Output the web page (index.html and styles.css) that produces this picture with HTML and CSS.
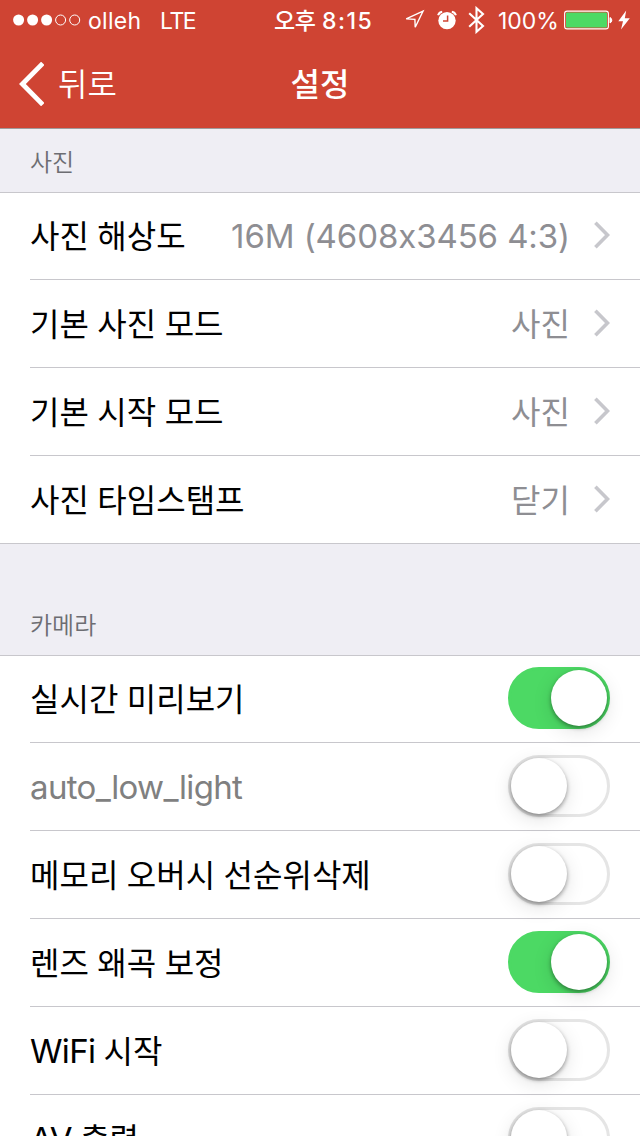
FILE: index.html
```html
<!DOCTYPE html>
<html lang="ko">
<head>
<meta charset="utf-8">
<title>설정</title>
<link rel="stylesheet" href="styles.css">
</head>
<body>
<div class="screen">
  <header class="header">
    <div class="status">
      <div class="status-left">
        <svg class="signal" width="68" height="12" viewBox="0 0 68 12"><g fill="#fff"><circle cx="5.6" cy="6" r="5.5"/><circle cx="19.6" cy="6" r="5.5"/><circle cx="33.6" cy="6" r="5.5"/></g><g fill="none" stroke="#fff"><circle cx="47.6" cy="6" r="5"/><circle cx="61.7" cy="6" r="5"/></g></svg>
        <span class="carrier">olleh</span>
        <span class="network">LTE</span>
      </div>
      <div class="status-time"><span class="ampm">오후</span><span class="clock">8:15</span></div>
      <div class="status-right">
        <svg class="icon-location" width="22" height="22" viewBox="0 0 22 22"><path d="M20 2.2L3.2 9.9L11.9 10.3L12.2 18.2Z" fill="none" stroke="#fff" stroke-width="1.4"/></svg>
        <svg class="icon-alarm" width="20" height="20" viewBox="0 0 20 20"><circle cx="10" cy="10.6" r="8.7" fill="#fff"/><path d="M1.1 5.3A5 5 0 0 1 5.2 1.7M14.8 1.7A5 5 0 0 1 18.9 5.3" fill="none" stroke="#fff" stroke-width="2"/><path d="M10.6 5.4V10.9H6" fill="none" stroke="#cf4433" stroke-width="1.5"/></svg>
        <svg class="icon-bluetooth" width="17" height="28" viewBox="0 0 17 28"><path d="M1.2 7.2L15 20L8.5 25.8V2.2L15 8L1.2 20.8" fill="none" stroke="#fff" stroke-width="2.1"/></svg>
        <span class="percent">100%</span>
        <svg class="icon-battery" width="50" height="20" viewBox="0 0 50 20"><rect x=".6" y="1.1" width="43.8" height="17.8" rx="2.5" fill="none" stroke="#fff" stroke-width="1.1"/><rect x="2" y="2.5" width="41" height="15" rx="1" fill="#4cd964"/><path d="M46 7.5A3 3 0 0 1 46 13Z" fill="#fff" stroke="#fff"/></svg>
        <svg class="icon-bolt" width="12" height="20" viewBox="0 0 12 20"><path d="M8.2 .5L.3 11.3H5L3 19.5L11.8 8.2H6.8Z" fill="#fff"/></svg>
      </div>
    </div>
    <nav class="nav">
      <div class="back">
        <svg width="26" height="44" viewBox="0 0 26 44"><path d="M24.8 1.4L4.4 22L24.8 42.6" fill="none" stroke="#fff" stroke-width="4.8"/></svg>
        <span>뒤로</span>
      </div>
      <h1 class="title">설정</h1>
      <div class="nav-end"></div>
    </nav>
  </header>
  <main>
    <h2 class="section-title first">사진</h2>
    <section class="group">
      <div class="row"><span class="label">사진 해상도</span><span class="value latin resolution">16M (4608x3456 4:3)</span><svg class="chevron" width="17" height="28" viewBox="0 0 17 28"><path d="M2.4 1.8L14.5 14L2.4 26.2" fill="none" stroke="#c7c7cc" stroke-width="3.6"/></svg></div>
      <div class="row"><span class="label">기본 사진 모드</span><span class="value">사진</span><svg class="chevron" width="17" height="28" viewBox="0 0 17 28"><path d="M2.4 1.8L14.5 14L2.4 26.2" fill="none" stroke="#c7c7cc" stroke-width="3.6"/></svg></div>
      <div class="row"><span class="label">기본 시작 모드</span><span class="value">사진</span><svg class="chevron" width="17" height="28" viewBox="0 0 17 28"><path d="M2.4 1.8L14.5 14L2.4 26.2" fill="none" stroke="#c7c7cc" stroke-width="3.6"/></svg></div>
      <div class="row last"><span class="label">사진 타임스탬프</span><span class="value">닫기</span><svg class="chevron" width="17" height="28" viewBox="0 0 17 28"><path d="M2.4 1.8L14.5 14L2.4 26.2" fill="none" stroke="#c7c7cc" stroke-width="3.6"/></svg></div>
    </section>
    <h2 class="section-title">카메라</h2>
    <section class="group">
      <div class="row"><span class="label">실시간 미리보기</span><span class="switch on"><span class="knob"></span></span></div>
      <div class="row"><span class="label latin disabled">auto_low_light</span><span class="switch"><span class="knob"></span></span></div>
      <div class="row"><span class="label">메모리 오버시 선순위삭제</span><span class="switch"><span class="knob"></span></span></div>
      <div class="row"><span class="label">렌즈 왜곡 보정</span><span class="switch on"><span class="knob"></span></span></div>
      <div class="row"><span class="label mixed"><span class="latin">WiFi</span> 시작</span><span class="switch"><span class="knob"></span></span></div>
      <div class="row"><span class="label mixed"><span class="latin">AV</span> 출력</span><span class="switch"><span class="knob"></span></span></div>
    </section>
  </main>
</div>
</body>
</html>
```
FILE: styles.css
```css
* { box-sizing: border-box; }
body { margin: 0; background: #efeef4; font-family: "Noto Sans CJK KR", sans-serif; }
svg { display: block; flex: none; }
h1, h2 { margin: 0; }
.screen { width: 640px; height: 1136px; overflow: hidden; background: #efeef4; }

.header { height: 129px; background: #cf4433; border-bottom: 1px solid #a09a9c; color: #fff; }
.status { display: grid; grid-template-columns: 274px 110px 1fr; height: 40px; white-space: nowrap; font-family: Inter, sans-serif; font-size: 23px; line-height: 40px; }
.status-left, .status-right, .status-time { display: flex; align-items: center; height: 40px; }
.status-left { padding-left: 13px; }
.status-left > span, .percent, .clock { padding-top: 2px; }
.carrier { margin-left: 7px; width: 72px; letter-spacing: 0.3px; }
.network { letter-spacing: -1.4px; }
.ampm { font-family: "Noto Sans CJK KR", sans-serif; font-weight: 500; width: 48px; letter-spacing: -0.5px; padding-bottom: 3px; }
.clock { font-weight: 500; letter-spacing: 1.5px; }
.status-right { padding-left: 19px; }
.icon-alarm { margin-left: 12px; }
.icon-bluetooth { margin-left: 11px; }
.percent { width: 66px; margin-left: 13px; font-size: 23px; }
.icon-bolt { margin-left: 4px; }

.nav { display: grid; grid-template-columns: 200px 240px 200px; align-items: center; height: 88px; }
.back { display: flex; align-items: center; padding-left: 18px; gap: 14px; font-size: 32px; font-weight: 350; line-height: 48px; }
.back span { padding-bottom: 5px; }
.title { padding-bottom: 5px; text-align: center; font-size: 32px; font-weight: 500; line-height: 48px; }

.section-title { height: 111px; padding: 62px 30px 0; font-size: 24px; font-weight: 350; line-height: 36px; color: #6d6d72; }
.section-title.first { height: 63px; padding-top: 14px; }

.group { background: #fff; border-top: 1px solid #c8c7cc; }
.row { display: flex; align-items: center; height: 88px; margin-left: 30px; padding: 0 30px 2px 0; border-bottom: 1px solid #c8c7cc; }
.row:first-child { height: 87px; }
.row.last { margin-left: 0; padding-left: 30px; }
.label { flex: 1; padding-bottom: 2px; white-space: nowrap; font-size: 32px; line-height: 48px; word-spacing: -0.5px; color: #000; }
.label.mixed { padding-bottom: 0; word-spacing: -0.8px; }
.value { margin-right: 23px; padding-bottom: 2px; white-space: nowrap; font-size: 32px; line-height: 48px; color: #8e8e93; }
.latin { padding: 0; font-family: Inter, sans-serif; font-size: 33px; letter-spacing: -0.65px; word-spacing: 0; font-feature-settings: "calt" 0; }
.latin.value, .latin.label { padding-bottom: 0; padding-top: 2px; }
.value.resolution { letter-spacing: -0.1px; }
.disabled { color: #808080; }

.switch { flex: none; display: flex; align-items: center; width: 102px; height: 62px; padding: 0; border: 3px solid #e5e5e5; border-radius: 31px; }
.switch.on { justify-content: flex-end; background: #4cd964; border-color: #4cd964; }
.knob { width: 56px; height: 56px; border-radius: 50%; background: #fff; box-shadow: 0 2px 4px rgba(0,0,0,.38), 0 5px 20px rgba(0,0,0,.12); }
```
